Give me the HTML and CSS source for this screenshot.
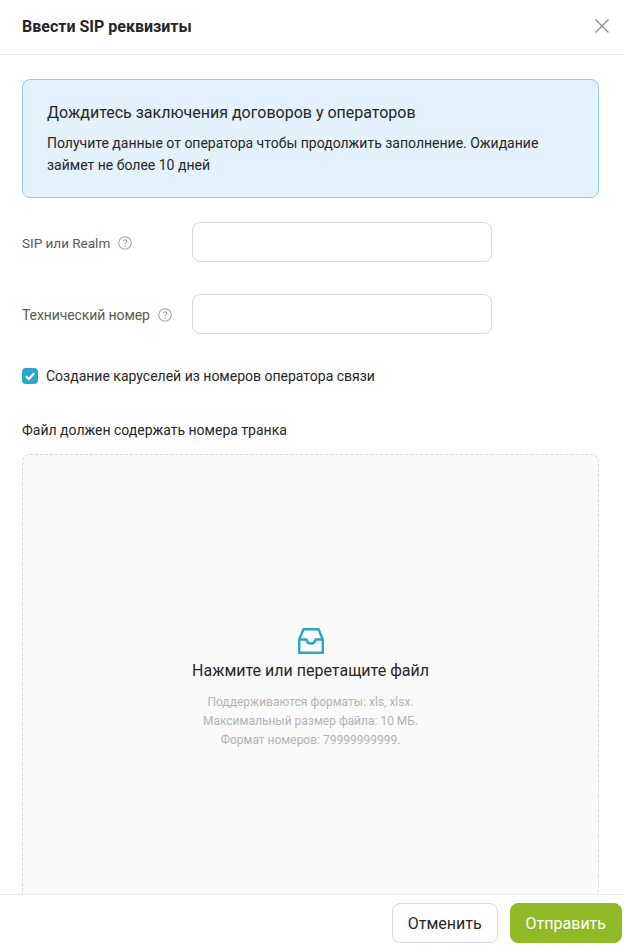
FILE: index.html

```html
<!DOCTYPE html>
<html lang="ru">
<head>
    <meta charset="UTF-8">
    <title>Ввести SIP реквизиты</title>
    <link rel="stylesheet" href="styles.css">
</head>
<body>
    <div class="modal">
        <div class="modal-header">
            <h2 class="modal-title">Ввести SIP реквизиты</h2>
            <svg class="close-icon" width="14" height="14" viewBox="0 0 14 14">
                <path d="M0.5 0.5L13.5 13.5M13.5 0.5L0.5 13.5" fill="none" stroke="#8c8c8c" stroke-width="1.3"/>
            </svg>
        </div>
        <div class="modal-body">
            <div class="alert">
                <div class="alert-title">Дождитесь заключения договоров у операторов</div>
                <div class="alert-text">Получите данные от оператора чтобы продолжить заполнение. Ожидание займет не более 10 дней</div>
            </div>
            <div class="field field-first">
                <div class="field-label">
                    <span class="label-small">SIP или Realm</span>
                    <svg class="help-icon" width="14" height="14" viewBox="0 0 14 14">
                        <circle cx="7" cy="7" r="6.3" fill="none" stroke="#a6a6a6" stroke-width="1.1"/>
                        <path d="M5.2 5.6C5.2 4.5 6 3.9 7 3.9C8 3.9 8.8 4.5 8.8 5.4C8.8 6.6 7 6.7 7 8.2" fill="none" stroke="#a6a6a6" stroke-width="1.1"/>
                        <circle cx="7" cy="10" r="0.7" fill="#a6a6a6"/>
                    </svg>
                </div>
                <input class="text-input" type="text">
            </div>
            <div class="field">
                <div class="field-label">
                    <span class="label-tight">Технический номер</span>
                    <svg class="help-icon" width="14" height="14" viewBox="0 0 14 14">
                        <circle cx="7" cy="7" r="6.3" fill="none" stroke="#a6a6a6" stroke-width="1.1"/>
                        <path d="M5.2 5.6C5.2 4.5 6 3.9 7 3.9C8 3.9 8.8 4.5 8.8 5.4C8.8 6.6 7 6.7 7 8.2" fill="none" stroke="#a6a6a6" stroke-width="1.1"/>
                        <circle cx="7" cy="10" r="0.7" fill="#a6a6a6"/>
                    </svg>
                </div>
                <input class="text-input" type="text">
            </div>
            <label class="checkbox-row">
                <span class="checkbox">
                    <svg width="16" height="16" viewBox="0 0 16 16">
                        <path d="M3.8 8.2L6.8 11L12.2 5.2" fill="none" stroke="#fff" stroke-width="2.2"/>
                    </svg>
                </span>
                <span>Создание каруселей из номеров оператора связи</span>
            </label>
            <div class="upload-label">Файл должен содержать номера транка</div>
            <div class="dropzone">
                <svg class="inbox-icon" width="26" height="26" viewBox="0 0 26 26">
                    <path d="M1.2 11.5L5.5 1.2H20.5L24.8 11.5V24.8H1.2Z M1.2 11.5H8.5C8.8 14 10.6 15.5 13 15.5C15.4 15.5 17.2 14 17.5 11.5H24.8" fill="none" stroke="#2ca5cc" stroke-width="2.4" stroke-linejoin="round"/>
                </svg>
                <div class="dropzone-title">Нажмите или перетащите файл</div>
                <div class="dropzone-hint">
                    Поддерживаются форматы: xls, xlsx.<br>
                    Максимальный размер файла: 10 МБ.<br>
                    Формат номеров: 79999999999.
                </div>
            </div>
        </div>
        <div class="modal-footer">
            <button class="btn btn-cancel">Отменить</button>
            <button class="btn btn-send">Отправить</button>
        </div>
    </div>
</body>
</html>
```

FILE: styles.css

```css
body {
    font-family: Roboto, "Liberation Sans", sans-serif;
    margin: 0;
    padding: 0;
    height: 100vh;
    overflow: hidden;
    background: white;
    color: #262626;
}
.modal {
    display: flex;
    flex-direction: column;
    height: 100vh;
}
.modal-header {
    display: flex;
    align-items: center;
    justify-content: space-between;
    flex: none;
    height: 54px;
    padding: 0 15px 0 22px;
    border-bottom: 1px solid #ebebeb;
}
.modal-title {
    margin: 0;
    font-size: 16px;
    font-weight: 700;
    line-height: 52px;
}
.close-icon {
    margin-top: -2px;
}
.modal-body {
    flex: 1;
    overflow: hidden;
    padding: 24px 25px 0 22px;
}
.alert {
    box-sizing: border-box;
    height: 119px;
    padding: 21px 24px;
    background: #e3f2fd;
    border: 1px solid #90caf9;
    border-radius: 8px;
}
.alert-title {
    font-size: 16px;
    line-height: 24px;
}
.alert-text {
    margin-top: 7px;
    font-size: 14px;
    line-height: 22px;
}
.field {
    display: flex;
    align-items: center;
    margin-top: 32px;
}
.field-first {
    margin-top: 24px;
}
.field-label {
    display: flex;
    align-items: center;
    width: 170px;
    padding-top: 2px;
    font-size: 14px;
    color: #595959;
}
.label-small {
    font-size: 13.5px;
}
.label-tight {
    letter-spacing: -0.1px;
}
.help-icon {
    margin-left: 8px;
}
.text-input {
    box-sizing: border-box;
    width: 300px;
    height: 40px;
    padding: 0 12px;
    background: white;
    border: 1px solid #d9d9d9;
    border-radius: 8px;
}
.checkbox-row {
    display: flex;
    align-items: center;
    margin-top: 31px;
    font-size: 14px;
    line-height: 22px;
}
.checkbox {
    display: flex;
    width: 16px;
    height: 16px;
    margin-right: 8px;
    background: #2ca5cc;
    border-radius: 4px;
}
.upload-label {
    margin-top: 33px;
    font-size: 14px;
    line-height: 20px;
}
.dropzone {
    box-sizing: border-box;
    display: flex;
    flex-direction: column;
    align-items: center;
    justify-content: center;
    height: 469px;
    margin-top: 14px;
    background: #fafafa;
    border: 1px dashed #d9d9d9;
    border-radius: 8px;
}
.dropzone-title {
    margin-top: 5px;
    font-size: 16px;
    line-height: 24px;
}
.dropzone-hint {
    margin-top: 10px;
    font-size: 12px;
    line-height: 19px;
    text-align: center;
    color: #b3b3b3;
}
.modal-footer {
    display: flex;
    justify-content: flex-end;
    gap: 12px;
    flex: none;
    box-sizing: border-box;
    height: 54px;
    padding: 8px 2px 0 0;
    background: white;
    border-top: 1px solid #ebebeb;
}
.btn {
    height: 40px;
    padding: 0 15px;
    font-family: inherit;
    font-size: 16px;
    border-radius: 8px;
}
.btn-cancel {
    background: white;
    color: #262626;
    border: 1px solid #d9d9d9;
}
.btn-send {
    background: #8fba26;
    color: white;
    border: 1px solid #8fba26;
}
```
